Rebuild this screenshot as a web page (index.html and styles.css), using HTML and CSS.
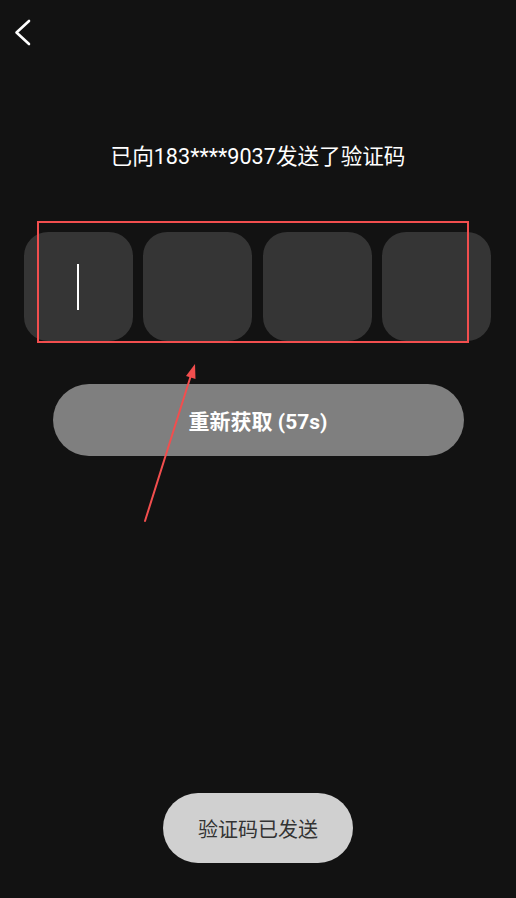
FILE: index.html
```html
<!DOCTYPE html>
<html lang="zh">
<head>
<meta charset="utf-8">
<title>验证码</title>
<link rel="stylesheet" href="styles.css">
</head>
<body>
<div class="screen">
  <header class="topbar">
    <button class="back" aria-label="返回">
      <svg width="24" height="28" viewBox="0 0 24 28"><polyline points="17,3 4.5,14.5 17,26" fill="none" stroke="#fff" stroke-width="2.6" stroke-linecap="round" stroke-linejoin="round"/></svg>
    </button>
  </header>
  <p class="title">已向183****9037发送了验证码</p>
  <div class="code-row">
    <div class="code-box"><span class="cursor"></span></div>
    <div class="code-box"></div>
    <div class="code-box"></div>
    <div class="code-box"></div>
  </div>
  <button class="resend">重新获取 (57s)</button>
  <div class="annot-rect"></div>
  <svg class="annot-arrow" width="60" height="170" viewBox="140 360 60 170">
    <line x1="145" y1="521" x2="192" y2="372" stroke="#f24e4e" stroke-width="2" stroke-linecap="round"/>
    <polygon points="195,364 195.5,379 186,376" fill="#f24e4e"/>
  </svg>
  <div class="toast">验证码已发送</div>
</div>
</body>
</html>
```
FILE: styles.css
```css
html, body {
  margin: 0;
  padding: 0;
  background: #121212;
}
.screen {
  position: relative;
  width: 516px;
  height: 898px;
  background: #121212;
  font-family: Roboto, "Noto Sans CJK SC", sans-serif;
  color: #fff;
  overflow: hidden;
}
.topbar {
  height: 64px;
  display: flex;
  align-items: flex-start;
  padding: 18px 0 0 12px;
  box-sizing: border-box;
}
.back {
  background: none;
  border: 0;
  padding: 0;
  width: 24px;
  height: 28px;
  cursor: pointer;
}
.back svg { display: block; }
.title {
  margin: 79px 0 0;
  text-align: center;
  font-size: 21.6px;
  line-height: 28px;
  color: #fff;
}
.code-row {
  margin-top: 61px;
  display: flex;
  justify-content: center;
  gap: 10.5px;
  padding-right: 1px;
}
.code-box {
  width: 109px;
  height: 109px;
  border-radius: 24px;
  background: #353535;
  display: flex;
  align-items: center;
  justify-content: center;
}
.cursor {
  width: 2px;
  height: 46px;
  background: #fff;
}
.resend {
  display: block;
  margin: 43px auto 0;
  width: 411px;
  height: 72px;
  border: 0;
  border-radius: 36px;
  background: #7f7f7f;
  color: #fff;
  font-family: Roboto, "Noto Sans CJK SC", sans-serif;
  font-size: 21px;
  font-weight: 700;
  padding: 0;
}
.annot-rect {
  position: absolute;
  left: 37px;
  top: 221px;
  width: 432px;
  height: 122px;
  border: 2px solid #f24e4e;
  box-sizing: border-box;
}
.annot-arrow {
  position: absolute;
  left: 140px;
  top: 360px;
}
.toast {
  position: absolute;
  left: 163px;
  bottom: 35px;
  width: 190px;
  height: 70px;
  border-radius: 35px;
  background: #d0d0d0;
  color: #333;
  font-size: 20px;
  display: flex;
  align-items: center;
  justify-content: center;
}
```
